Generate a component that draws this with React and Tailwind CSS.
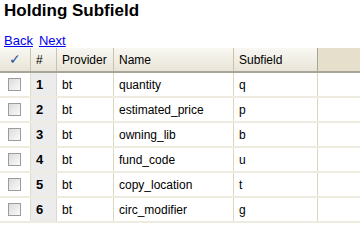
import React from "react";

const rows = [
  { n: 1, provider: "bt", name: "quantity", sub: "q" },
  { n: 2, provider: "bt", name: "estimated_price", sub: "p" },
  { n: 3, provider: "bt", name: "owning_lib", sub: "b" },
  { n: 4, provider: "bt", name: "fund_code", sub: "u" },
  { n: 5, provider: "bt", name: "copy_location", sub: "t" },
  { n: 6, provider: "bt", name: "circ_modifier", sub: "g" },
];

function Checkbox() {
  return (
    <span className="block w-[13px] h-[13px] border border-[#9c9c9c] bg-gradient-to-br from-[#dcdcdc] to-[#fafafa]" />
  );
}

export default function App() {
  return (
    <div className="w-[360px] h-[240px] bg-white overflow-hidden text-black" style={{ fontFamily: '"Liberation Sans", Arial, sans-serif' }}>
      <h1 className="pl-[4px] pt-[1px] text-[17px] font-bold leading-[20px]">Holding Subfield</h1>
      <div className="pl-[4px] mt-[12px] text-[13px] leading-[15px] flex gap-[6px]">
        <a href="#" className="text-[#0000ee] underline">Back</a>
        <a href="#" className="text-[#0000ee] underline">Next</a>
      </div>

      <div className="flex h-[25px] text-[12px] border-b-2 border-[#a9a498]">
        <div className="w-[31px] border-r border-[#cbc4ac] bg-gradient-to-b from-[#f8f7f2] to-[#e9e5d7] flex items-center justify-center text-[#2c4d9c] text-[14px]">✓</div>
        <div className="w-[26px] border-r border-[#cbc4ac] bg-gradient-to-b from-[#f8f7f2] to-[#e9e5d7] flex items-center pl-[5px]">#</div>
        <div className="w-[57px] border-r border-[#cbc4ac] bg-gradient-to-b from-[#f8f7f2] to-[#e9e5d7] flex items-center pl-[5px]">Provider</div>
        <div className="w-[120px] border-r border-[#cbc4ac] bg-gradient-to-b from-[#f8f7f2] to-[#e9e5d7] flex items-center pl-[5px]">Name</div>
        <div className="w-[84px] bg-gradient-to-b from-[#f8f7f2] to-[#e9e5d7] flex items-center pl-[5px] border-r border-[#a9a498]">Subfield</div>
        <div className="flex-1 bg-[#e5dfcb]" />
      </div>

      {rows.map((r) => (
        <div key={r.n} className="flex h-[25px] text-[12px] border-b-2 border-[#eeebe1]">
          <div className="w-[31px] border-r border-[#e2dccb] flex items-center pl-[8px]">
            <Checkbox />
          </div>
          <div className="w-[26px] border-r border-[#ddd8c8] bg-[#ececec] flex items-center pl-[5px] font-bold text-[13px]">{r.n}</div>
          <div className="w-[57px] border-r border-[#ddd6bf] flex items-center pl-[5px]">{r.provider}</div>
          <div className="w-[120px] border-r border-[#ddd6bf] flex items-center pl-[5px]">{r.name}</div>
          <div className="w-[84px] border-r border-[#ddd6bf] flex items-center pl-[5px]">{r.sub}</div>
          <div className="flex-1" />
        </div>
      ))}
    </div>
  );
}
